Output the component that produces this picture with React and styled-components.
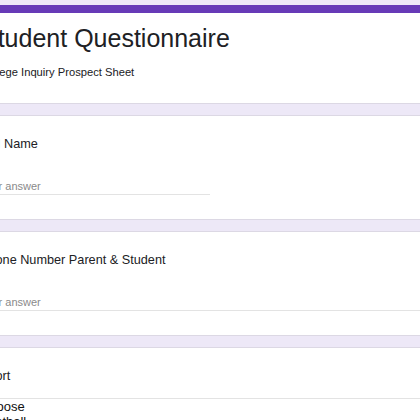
import React from 'react';
import styled, { createGlobalStyle } from 'styled-components';

const GlobalStyle = createGlobalStyle`
  html, body {
    margin: 0;
    padding: 0;
    background: #ede8f7;
    overflow: hidden;
  }
  body {
    font-family: "Liberation Sans", Arial, sans-serif;
    color: #202124;
  }
`;

const Page = styled.div`
  width: 506px;
  margin-left: -45px;
  padding-top: 5px;
  display: flex;
  flex-direction: column;
  gap: 11px;
`;

const Card = styled.div`
  background: #ffffff;
  border: 1px solid #dcd8e4;
  border-top: ${(props) => (props.$header ? '8px solid #673ab7' : '1px solid #dcd8e4')};
  padding: ${(props) => (props.$header ? '11px 24px 24px' : '21px 24px 24px')};
  display: flex;
  flex-direction: column;
`;

const Title = styled.h1`
  margin: 0 0 0 1px;
  font-size: 25px;
  font-weight: 400;
  line-height: 29px;
  color: #202124;
`;

const Subtitle = styled.div`
  margin-top: 13px;
  font-size: 11.2px;
  line-height: 13px;
  color: #202124;
`;

const Question = styled.div`
  font-size: 12.7px;
  line-height: 15px;
  color: #202124;
`;

const Answer = styled.div`
  margin-top: 27px;
  width: ${(props) => (props.$long ? '100%' : '230px')};
  font-size: 11px;
  line-height: 15px;
  color: #8a8a8a;
  border-bottom: 1px solid #e3e3e3;
`;

const OptionList = styled.ul`
  list-style: none;
  margin: 14px -24px -24px 0;
  padding: 0;
  border-top: 1px solid #e3e3e3;
  background: #ffffff;
`;

const Option = styled.li`
  font-size: 13px;
  line-height: 15px;
  color: #111111;
`;

function TextQuestion({ label, long }) {
  return (
    <Card>
      <Question>{label}</Question>
      <Answer $long={long}>Your answer</Answer>
    </Card>
  );
}

export default function App() {
  const sports = ['Choose', 'Football', 'Basketball', 'Baseball', 'Soccer'];

  return (
    <>
      <GlobalStyle />
      <Page>
        <Card $header>
          <Title>Student Questionnaire</Title>
          <Subtitle>College Inquiry Prospect Sheet</Subtitle>
        </Card>
        <TextQuestion label="Full Name" />
        <TextQuestion label="Phone Number Parent & Student" long />
        <Card>
          <Question>Sport</Question>
          <OptionList>
            {sports.map((s) => (
              <Option key={s}>{s}</Option>
            ))}
          </OptionList>
        </Card>
      </Page>
    </>
  );
}
